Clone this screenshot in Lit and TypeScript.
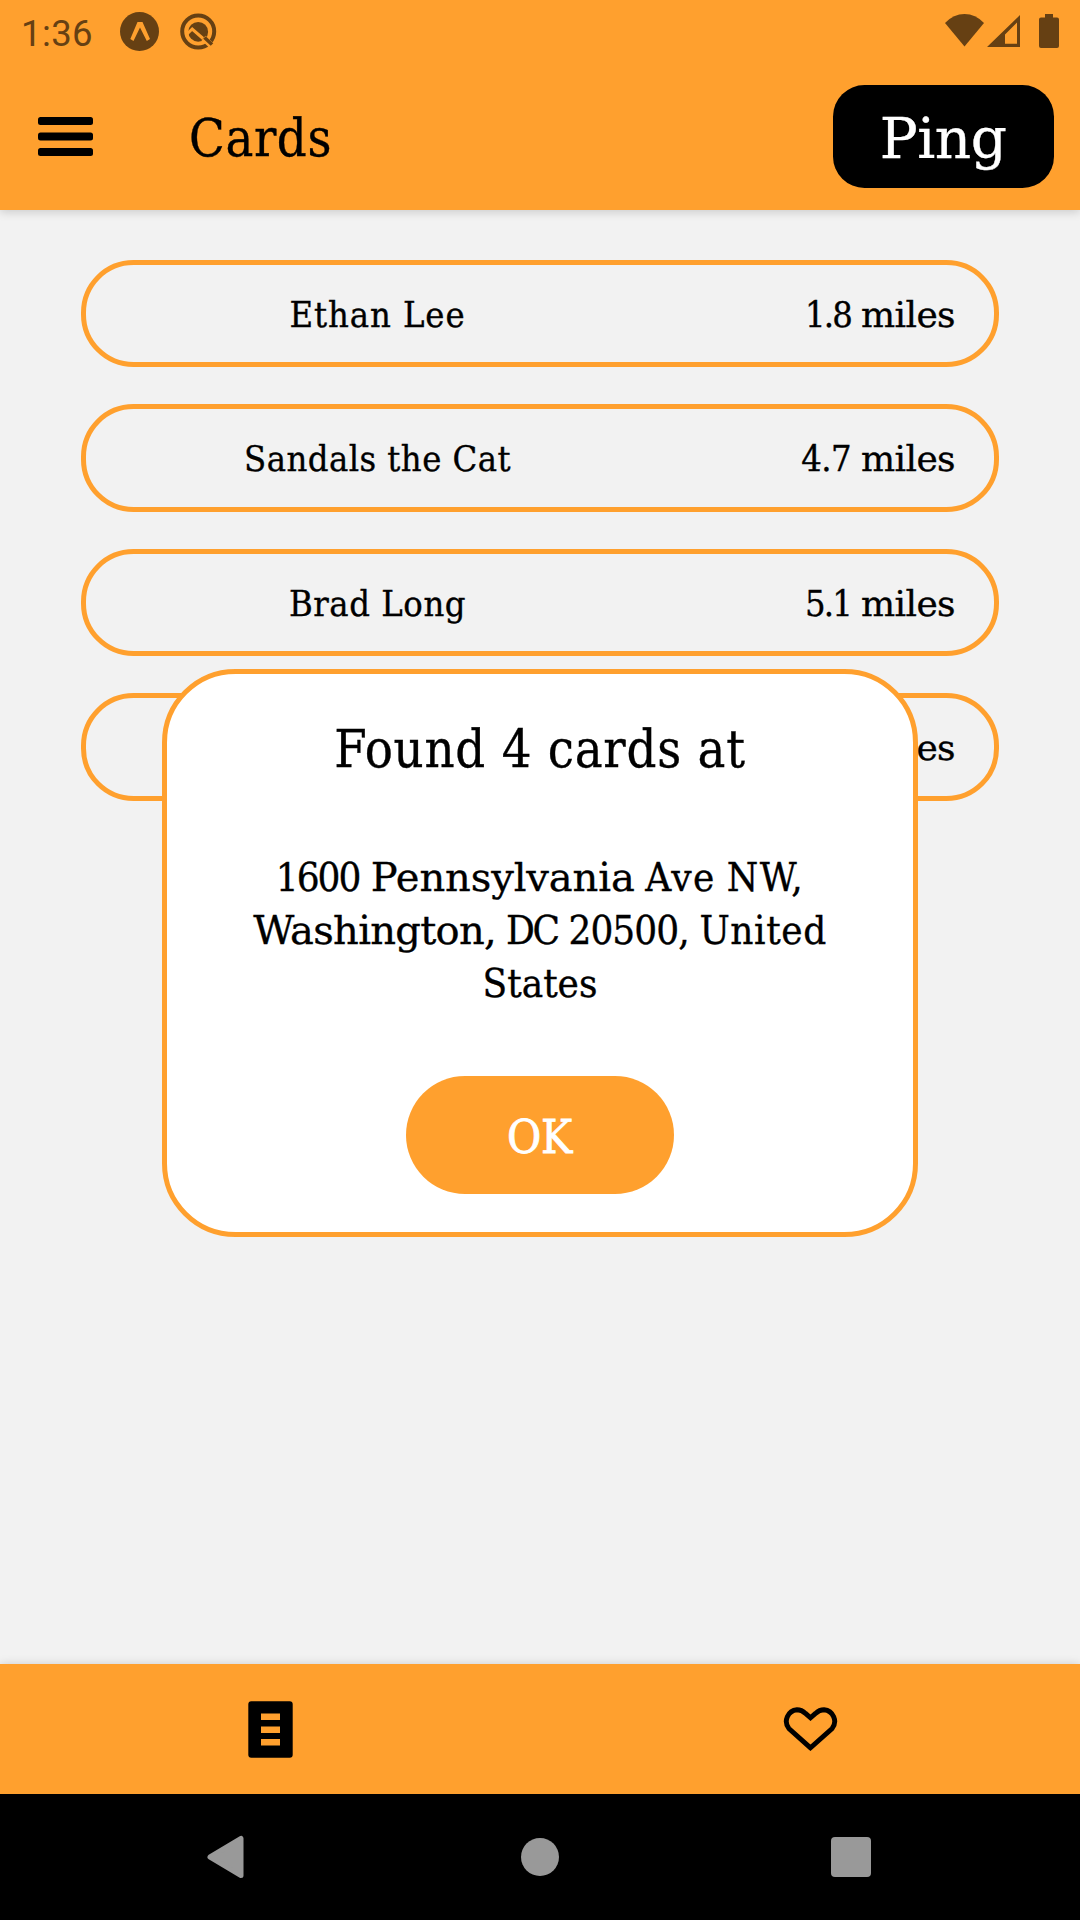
import { LitElement, html, css } from "lit";
import { customElement, property, state } from "lit/decorators.js";

interface Card {
  name: string;
  miles: string;
  spacing: string;
  digits: string;
}

const CARDS: Card[] = [
  { name: "Ethan Lee", miles: "1.8", spacing: "wide", digits: "tight" },
  { name: "Sandals the Cat", miles: "4.7", spacing: "normal", digits: "loose" },
  { name: "Brad Long", miles: "5.1", spacing: "medium", digits: "tight" },
  { name: "", miles: "8.2", spacing: "normal", digits: "tight" },
];

@customElement("status-bar")
class StatusBar extends LitElement {
  static styles = css`
    :host {
      display: flex;
      align-items: flex-start;
      justify-content: space-between;
      height: 63px;
      box-sizing: border-box;
      padding: 12px 21px 0 21px;
      color: #664013;
      font-family: Roboto, sans-serif;
    }
    .group { display: flex; align-items: flex-start; }
    .time { font-size: 36.5px; line-height: 43px; width: 99px; letter-spacing: 0.4px; }
    .expo { width: 39px; height: 39px; margin-right: 21px; }
    .quick { width: 37px; height: 37px; margin-top: 1px; }
    .wifi { width: 39px; height: 33px; margin: 2px 3px 0 0; }
    .signal { width: 33px; height: 33px; margin: 2px 19px 0 0; }
    .battery { width: 20px; height: 34px; margin-top: 2px; }
    svg { display: block; }
  `;
  render() {
    return html`
      <div class="group">
        <span class="time">1:36</span>
        <svg class="expo" viewBox="0 0 39 39">
          <circle cx="19.5" cy="19.5" r="19.5" fill="#664013" />
          <path d="M17.500 10h5L30 27l-3.200 2L20 15.500 13.500 29l-3.200-2z" fill="#ffa02e" />
        </svg>
        <svg class="quick" viewBox="0 0 37 37" fill="none">
          <circle cx="18.200" cy="18.500" r="16" stroke="#664013" stroke-width="4" />
          <circle cx="18.200" cy="18.800" r="9.900" fill="#664013" />
          <path d="M7 21L12.200 16L23 25.500" stroke="#ffa02e" stroke-width="3" />
          <path d="M23.500 25L32.500 33.500" stroke="#ffa02e" stroke-width="6" />
          <path d="M24.500 24.500L32 31.500" stroke="#664013" stroke-width="3.600" />
        </svg>
      </div>
      <div class="group">
        <svg class="wifi" viewBox="0 0 39 33"><path d="M0 9Q8.500 0 19.500 0T39 9L19.500 32.500z" fill="currentColor" /></svg>
        <svg class="signal" viewBox="0 0 33 33">
          <path fill="currentColor" fill-rule="evenodd" d="M33 1V33H0zM30 8.500L18 20.500V29.700H30z" />
        </svg>
        <svg class="battery" viewBox="0 0 20 34">
          <path fill="currentColor" d="M6 0h8v3.500h4a2 2 0 0 1 2 2V32a2 2 0 0 1-2 2H2a2 2 0 0 1-2-2V5.500a2 2 0 0 1 2-2h4z" />
        </svg>
      </div>
    `;
  }
}

@customElement("card-row")
class CardRow extends LitElement {
  @property({ attribute: false }) card!: Card;
  static styles = css`
    :host { display: block; }
    .row {
      display: flex;
      align-items: center;
      height: 107.4px;
      box-sizing: border-box;
      border: 5px solid #ffa02e;
      border-radius: 52.5px;
      padding: 2.5px 39px 0 0;
      font-size: 36px;
      line-height: 48px;
      white-space: nowrap;
    }
    .name { width: 583px; text-align: center; }
    .distance { flex: 1; display: flex; justify-content: flex-end; align-items: baseline; gap: 10px; }
    .tight { letter-spacing: -1.8px; }
    .loose { letter-spacing: -0.6px; }
    .unit { font-family: "DejaVu Serif", serif; letter-spacing: -0.6px; }
    .wide { letter-spacing: 0.9px; }
    .medium { letter-spacing: 0.56px; }
    .normal { letter-spacing: 0.46px; }
  `;
  render() {
    const c = this.card;
    return html`<div class="row">
      <span class="name ${c.spacing}">${c.name}</span>
      <span class="distance"><span class="${c.digits}">${c.miles}</span> <span class="unit">miles</span></span>
    </div>`;
  }
}

@customElement("found-dialog")
class FoundDialog extends LitElement {
  static styles = css`
    :host { display: block; }
    .dialog {
      display: flex;
      flex-direction: column;
      align-items: center;
      width: 756px;
      height: 568px;
      box-sizing: border-box;
      border: 5px solid #ffa02e;
      border-radius: 73.5px;
      background: #fff;
      padding-top: 40px;
      white-space: nowrap;
    }
    .title { font-size: 52px; line-height: 70px; letter-spacing: 0.75px; }
    .address {
      display: flex;
      flex-direction: column;
      align-items: center;
      margin-top: 66.500px;
      font-size: 40px;
      line-height: 53px;
      word-spacing: -2px;
    }
    .number { letter-spacing: -2px; word-spacing: 2px; }
    .street { font-family: "DejaVu Serif", serif; letter-spacing: -0.1px; }
    .avenue { letter-spacing: 1.5px; }
    .city { font-family: "DejaVu Serif", serif; letter-spacing: -0.7px; }
    .district { letter-spacing: -2.5px; word-spacing: 2px; }
    .zip { letter-spacing: -0.9px; word-spacing: 0; }
    .country { letter-spacing: 0.6px; }
    .ok {
      display: flex;
      align-items: center;
      justify-content: center;
      width: 268px;
      height: 118px;
      box-sizing: border-box;
      margin-top: 66.500px;
      padding: 3px 1px 0 0;
      border: 0;
      border-radius: 59px;
      background: #ffa02e;
      color: #fff;
      font: inherit;
      font-size: 46.5px;
      line-height: 60px;
      letter-spacing: -0.3px;
      -webkit-text-stroke: 0.8px #fff;
    }
  `;
  render() {
    return html`<section class="dialog" role="dialog">
      <div class="title">Found 4 cards at</div>
      <div class="address">
        <span><span class="number">1600 </span><span class="street">Pennsylvania </span><span class="avenue">Ave NW,</span></span>
        <span><span class="city">Washington, </span><span class="district">DC </span><span class="zip">20500, </span><span class="country">United</span></span>
        <span>States</span>
      </div>
      <button class="ok" @click=${() => this.dispatchEvent(new CustomEvent("dismiss"))}>OK</button>
    </section>`;
  }
}

@customElement("app-root")
class AppRoot extends LitElement {
  @state() private open = true;
  static styles = css`
    :host {
      display: flex;
      flex-direction: column;
      position: relative;
      width: 1080px;
      height: 1920px;
      overflow: hidden;
      background: #f2f2f2;
      color: #000;
      font-family: "DejaVu Serif Condensed", "DejaVu Serif", serif;
      -webkit-text-stroke: 0.35px currentColor;
    }
    status-bar { -webkit-text-stroke: 0; }
    svg { display: block; }
    .top {
      height: 210px;
      background: #ffa02e;
      box-shadow: 0 2px 9px rgba(0, 0, 0, 0.17);
    }
    .header {
      display: flex;
      align-items: center;
      height: 147px;
      box-sizing: border-box;
      padding: 0 26px 0 38px;
    }
    .menu { width: 55px; height: 39px; }
    .heading { flex: 1; padding: 2px 0 0 96px; font-size: 52px; line-height: 70px; letter-spacing: 0.6px; }
    .ping {
      display: flex;
      align-items: center;
      justify-content: center;
      width: 221px;
      height: 103px;
      box-sizing: border-box;
      padding: 5px 1px 0 0;
      border: 0;
      border-radius: 31.5px;
      background: #000;
      color: #fff;
      font: inherit;
      font-family: "DejaVu Serif", serif;
      font-size: 56.5px;
      line-height: 76px;
      letter-spacing: -0.5px;
    }
    .list {
      flex: 1;
      display: flex;
      flex-direction: column;
      gap: 37px;
      padding: 50px 81px 0;
    }
    .tabs {
      display: grid;
      grid-template-columns: 1fr 1fr;
      align-items: center;
      justify-items: center;
      height: 130px;
      background: #ffa02e;
      box-shadow: 0 0 9px rgba(0, 0, 0, 0.15);
    }
    .cards-icon { width: 45px; height: 57px; }
    .heart-icon { width: 57px; height: 57px; }
    .nav {
      display: flex;
      align-items: center;
      justify-content: space-between;
      height: 126px;
      box-sizing: border-box;
      padding: 0 209px 0 206px;
      background: #000;
    }
    .nav-icon { width: 40px; height: 44px; }
    .home { width: 40px; height: 44px; margin-left: 3px; }
    .modal { position: absolute; left: 162px; top: 669px; }
  `;
  render() {
    return html`
      <div class="top">
        <status-bar></status-bar>
        <header class="header">
          <svg class="menu" viewBox="0 0 55 39">
            <rect y="0" width="55" height="8" rx="2.500" />
            <rect y="15.500" width="55" height="8" rx="2.500" />
            <rect y="31" width="55" height="8" rx="2.500" />
          </svg>
          <span class="heading">Cards</span>
          <button class="ping">Ping</button>
        </header>
      </div>
      <main class="list">${CARDS.map((card) => html`<card-row .card=${card}></card-row>`)}</main>
      <div class="tabs">
        <svg class="cards-icon" viewBox="0 0 45 57">
          <path fill-rule="evenodd" d="M3.300.3h38.400a3 3 0 0 1 3 3v50.400a3 3 0 0 1-3 3H3.300a3 3 0 0 1-3-3V3.300a3 3 0 0 1 3-3zM13 12.500v6.500h19v-6.500zM13 25.500v6.500h19v-6.500zM13 38v6.500h19V38z" />
        </svg>
        <svg class="heart-icon" viewBox="0 0 57 57" fill="none" stroke="#000" stroke-width="4.900">
          <path d="M28.500 46.800L6.900 27.600A11.700 11.700 0 0 1 15 8.700C18.500 8.700 21 10 23.500 12.400L28.500 16.800L33.500 12.400C36 10 38.500 8.700 42 8.700A11.700 11.700 0 0 1 50.100 27.600z" />
        </svg>
      </div>
      <nav class="nav">
        <svg class="nav-icon" viewBox="0 0 40 44">
          <path d="M4 22L35 3.500V40.500z" fill="#999" stroke="#999" stroke-width="5" stroke-linejoin="round" />
        </svg>
        <svg class="home" viewBox="0 0 40 44"><circle cx="20" cy="22" r="19" fill="#999" /></svg>
        <svg class="nav-icon" viewBox="0 0 40 44"><rect y="2" width="40" height="40" rx="4" fill="#999" /></svg>
      </nav>
      ${this.open ? html`<found-dialog class="modal" @dismiss=${() => (this.open = false)}></found-dialog>` : ""}
    `;
  }
}
